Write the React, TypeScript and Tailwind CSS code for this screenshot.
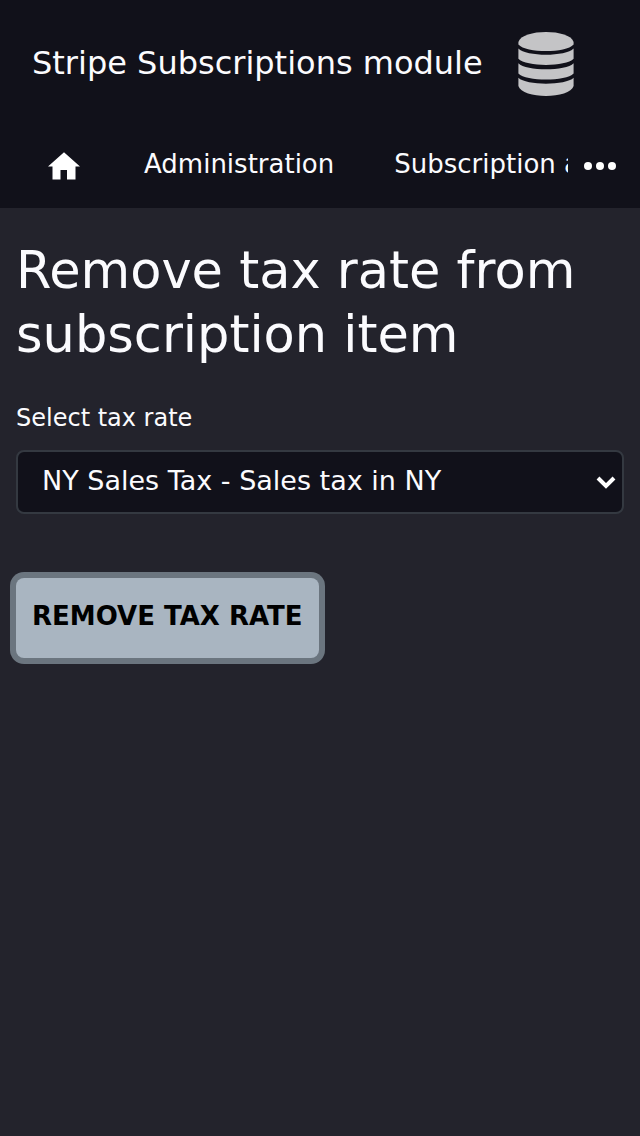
export default function App() {
  return (
    <div className="min-h-screen bg-[#23232c] text-[#fbfbfe] font-['DejaVu_Sans',sans-serif]">
      <header className="bg-[#11111a]">
        <div className="flex h-32 items-center gap-[35px] px-8">
          <span className="pb-0.5 text-[32px] leading-10 whitespace-nowrap">Stripe Subscriptions module</span>
          <svg aria-hidden="true" className="h-16 w-14 shrink-0" viewBox="0 0 56 64" fill="#c4c4c6">
            <path d="M0.400 10C4 -3.300 52 -3.300 55.600 10V12.500C48 21.300 8 21.300 0.400 12.500Z" />
            <path d="M0.400 16.500C8 24.800 48 24.800 55.600 16.500V26.800C48 35 8 35 0.400 26.800Z" />
            <path d="M0.400 31.200C8 39.300 48 39.300 55.600 31.200V41.500C48 49.600 8 49.600 0.400 41.500Z" />
            <path d="M0.400 45.800C8 53.700 48 53.700 55.600 45.800V54C52 67.300 4 67.300 0.400 54Z" />
          </svg>
        </div>
        <nav className="flex h-20 items-start pt-5">
          <div className="flex min-w-0 flex-1 items-start overflow-hidden whitespace-nowrap text-[26px] leading-8">
            <a href="#home" aria-label="Home" className="ml-12 shrink-0 pt-1">
              <svg className="size-8" viewBox="0 0 32 32" fill="white"><path d="M12.500 27.500V18H19v9.500h8.500V14.500H32L16 0.300 0 14.500h4.500v13Z" /></svg>
            </a>
            <a href="#administration" className="ml-16 shrink-0">Administration</a>
            <a href="#subscription" className="ml-15 shrink-0">Subscription administration</a>
          </div>
          <button type="button" aria-label="More" className="mr-6 ml-4 shrink-0 pt-0.5">
            <svg className="size-8" viewBox="0 0 32 32" fill="white"><circle cx="4" cy="16" r="4"/><circle cx="16" cy="16" r="4"/><circle cx="28" cy="16" r="4"/></svg>
          </button>
        </nav>
      </header>
      <main className="px-4 pt-[31px]">
        <h1 className="text-[51px] leading-16">Remove tax rate from subscription item</h1>
        <form>
          <label htmlFor="tax" className="mt-[33px] block text-2xl leading-9">Select tax rate</label>
          <div className="relative mt-3.5">
            <select id="tax" className="block h-16 w-full appearance-none rounded-lg border-2 border-[#343941] bg-[#11111a] px-6 pb-0.5 text-[27px]">
              <option>NY Sales Tax - Sales tax in NY</option>
            </select>
            <svg aria-hidden="true" className="pointer-events-none absolute top-6 right-2 h-4 w-5" viewBox="0 0 20 16" fill="none" stroke="white" strokeWidth="4"><path d="m2 4 8 8 8-8" /></svg>
          </div>
          <button type="button" className="mt-16 h-20 rounded-lg bg-[#a9b5c1] px-4 pb-1 text-[26px] font-bold text-black ring-6 ring-[#6b757f]">REMOVE TAX RATE</button>
        </form>
      </main>
    </div>
  );
}
